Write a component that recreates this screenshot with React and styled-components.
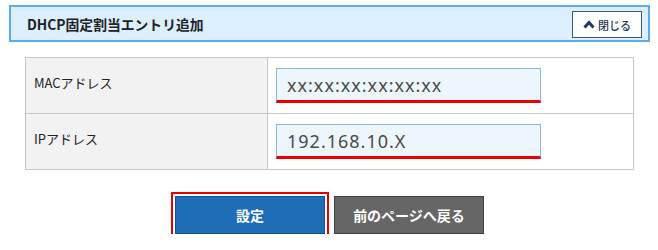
import React from "react";
import styled, { createGlobalStyle } from "styled-components";

const GlobalStyle = createGlobalStyle`
  html, body {
    margin: 0;
    padding: 0;
    background: #ffffff;
    font-family: "Noto Sans CJK JP", "Noto Sans", sans-serif;
    color: #222;
  }
`;

const Page = styled.div`
  width: 658px;
  padding-top: 5px;
`;

const Header = styled.div`
  margin-left: 9px;
  width: 641px;
  height: 37px;
  box-sizing: border-box;
  border: 2px solid #5aaaf0;
  background: #dcefff;
  display: flex;
  align-items: center;
  justify-content: space-between;
  padding: 0 6px 0 16px;
`;

const Title = styled.div`
  font-size: 13.8px;
  font-weight: bold;
  color: #222;
`;

const CloseButton = styled.button`
  width: 70px;
  height: 27px;
  box-sizing: border-box;
  background: #fff;
  border: 1px solid #3b5877;
  display: flex;
  align-items: center;
  justify-content: center;
  gap: 3px;
  padding: 0;
  font-family: inherit;
  font-size: 11px;
  font-weight: 500;
  color: #1d3557;
  margin-top: 2px;
`;

const FormTable = styled.table`
  margin: 15px 0 0 25px;
  width: 609px;
  border-collapse: collapse;
`;

const Row = styled.tr`
  height: 56px;
`;

const Label = styled.th`
  width: 242px;
  background: #f2f2f2;
  border: 1px solid #c6c6c6;
  text-align: left;
  font-weight: normal;
  font-size: 13px;
  color: #222;
  padding: 0 0 6px 8px;
  box-sizing: border-box;
`;

const Cell = styled.td`
  border: 1px solid #c6c6c6;
  padding: 0 0 0 8px;
`;

const Field = styled.input`
  display: block;
  width: 265px;
  height: 35px;
  box-sizing: border-box;
  background: #eef6fd;
  border: 1px solid #8ab8d6;
  border-bottom: 3px solid #ee0000;
  padding: 1px 0 0 10px;
  font-family: "Noto Sans", "DejaVu Sans", sans-serif;
  font-size: 18px;
  letter-spacing: 1px;
  color: #4a4a4a;
  outline: none;
`;

const Actions = styled.div`
  display: flex;
  justify-content: center;
  gap: 7px;
  margin-top: 26px;
  padding-left: 1px;
`;

const ActionButton = styled.button`
  width: 150px;
  height: 38px;
  box-sizing: border-box;
  border: 1px solid ${(p) => (p.$primary ? "#0e4f8f" : "#3f3f3f")};
  background: ${(p) => (p.$primary ? "#1f6db6" : "#666666")};
  color: #fff;
  font-family: inherit;
  font-size: 14px;
  font-weight: bold;
  outline: ${(p) => (p.$focused ? "2px solid #e60000" : "none")};
  outline-offset: 2px;
  margin-right: ${(p) => (p.$focused ? "2px" : "0")};
`;

function Chevron() {
  return (
    <svg width="12" height="9" viewBox="0 0 12 9">
      <polyline points="1.5,7.5 6,2.5 10.5,7.5" fill="none" stroke="#1d3a66" strokeWidth="3" />
    </svg>
  );
}

export default function App() {
  return (
    <Page>
      <GlobalStyle />
      <Header>
        <Title>DHCP固定割当エントリ追加</Title>
        <CloseButton>
          <Chevron />
          閉じる
        </CloseButton>
      </Header>
      <FormTable>
        <tbody>
          <Row>
            <Label>MACアドレス</Label>
            <Cell>
              <Field defaultValue="xx:xx:xx:xx:xx:xx" />
            </Cell>
          </Row>
          <Row>
            <Label>IPアドレス</Label>
            <Cell>
              <Field defaultValue="192.168.10.X" />
            </Cell>
          </Row>
        </tbody>
      </FormTable>
      <Actions>
        <ActionButton $primary $focused>設定</ActionButton>
        <ActionButton>前のページへ戻る</ActionButton>
      </Actions>
    </Page>
  );
}
